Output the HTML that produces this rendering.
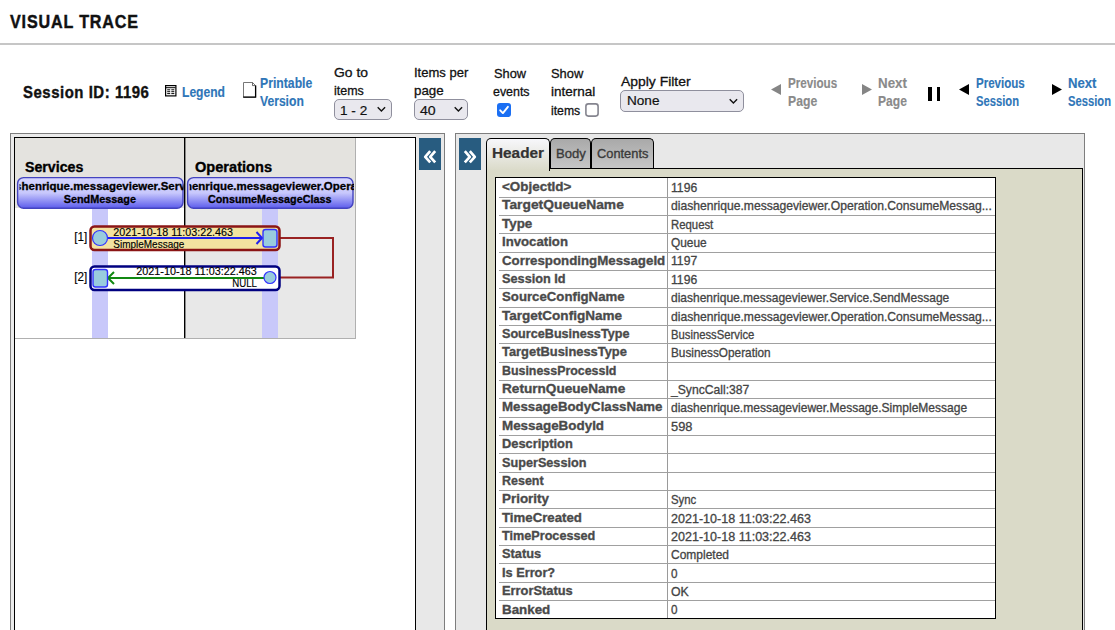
<!DOCTYPE html>
<html><head><meta charset="utf-8"><style>
*{margin:0;padding:0;box-sizing:border-box}
html,body{width:1115px;height:630px;overflow:hidden;background:#fff;font-family:"Liberation Sans",sans-serif;color:#000}
.a{position:absolute;white-space:nowrap}
</style></head><body>
<div class="a" style="left:10.00px;top:10.62px;font-size:19px;line-height:22.8px;font-weight:bold;color:#111;-webkit-text-stroke:0.45px #111;transform:scaleX(0.8472);transform-origin:0 0;letter-spacing:1.0px;">VISUAL TRACE</div>
<div class="a" style="left:0;top:43px;width:1115px;height:2px;background:#c6c6c6"></div>
<div class="a" style="left:23.00px;top:82.70px;font-size:16.8px;line-height:20.16px;font-weight:bold;color:#111;-webkit-text-stroke:0.4px #111;transform:scaleX(0.8899);transform-origin:0 0;letter-spacing:0.6px;">Session ID: 1196</div>
<svg class="a" style="left:165px;top:85px" width="12" height="12" viewBox="0 0 12 12">
<rect x="0.6" y="0.6" width="10.3" height="10.3" fill="#fff" stroke="#000" stroke-width="1.2"/>
<rect x="1" y="2.2" width="9.5" height="1" fill="#000"/>
<rect x="2.2" y="4.3" width="3" height="1" fill="#000"/><rect x="6.3" y="4.3" width="3" height="1" fill="#000"/>
<rect x="2.2" y="6.2" width="3" height="1" fill="#000"/><rect x="6.3" y="6.2" width="3" height="1" fill="#000"/>
<rect x="2.2" y="8.1" width="3" height="1" fill="#000"/><rect x="6.3" y="8.1" width="3" height="1" fill="#000"/>
</svg>
<div class="a" style="left:181.90px;top:83.85px;font-size:14px;line-height:16.8px;font-weight:bold;color:#2f76b8;-webkit-text-stroke:0.15px #2f76b8;transform:scaleX(0.8640);transform-origin:0 0;">Legend</div>
<svg class="a" style="left:242px;top:81px" width="16" height="18" viewBox="0 0 16 18">
<path d="M1.5 16.2 V1.5 H10.5 L13.6 4.6 V16.2 Z" fill="#fff" stroke="#777" stroke-width="1"/>
<path d="M13.6 4.6 V16.2 H1.2" fill="none" stroke="#000" stroke-width="1.3"/>
<path d="M10.5 1.5 V4.6 H13.6" fill="none" stroke="#444" stroke-width="0.8"/>
</svg>
<div class="a" style="left:259.90px;top:74.95px;font-size:14px;line-height:16.8px;font-weight:bold;color:#2f76b8;-webkit-text-stroke:0.15px #2f76b8;transform:scaleX(0.8728);transform-origin:0 0;">Printable</div>
<div class="a" style="left:259.50px;top:92.85px;font-size:14px;line-height:16.8px;font-weight:bold;color:#2f76b8;-webkit-text-stroke:0.15px #2f76b8;transform:scaleX(0.8660);transform-origin:0 0;">Version</div>
<div class="a" style="left:334.00px;top:65.01px;font-size:13.2px;line-height:15.84px;color:#111;-webkit-text-stroke:0.3px #111;transform:scaleX(1.0535);transform-origin:0 0;">Go to</div>
<div class="a" style="left:333.90px;top:82.91px;font-size:13.2px;line-height:15.84px;color:#111;-webkit-text-stroke:0.3px #111;transform:scaleX(0.9446);transform-origin:0 0;">items</div>
<div class="a" style="left:414.30px;top:65.01px;font-size:13.2px;line-height:15.84px;color:#111;-webkit-text-stroke:0.3px #111;transform:scaleX(0.9871);transform-origin:0 0;">Items per</div>
<div class="a" style="left:414.30px;top:82.61px;font-size:13.2px;line-height:15.84px;color:#111;-webkit-text-stroke:0.3px #111;transform:scaleX(1.0112);transform-origin:0 0;">page</div>
<div class="a" style="left:493.60px;top:66.01px;font-size:13.2px;line-height:15.84px;color:#111;-webkit-text-stroke:0.3px #111;transform:scaleX(0.9708);transform-origin:0 0;">Show</div>
<div class="a" style="left:493.40px;top:83.61px;font-size:13.2px;line-height:15.84px;color:#111;-webkit-text-stroke:0.3px #111;transform:scaleX(0.9407);transform-origin:0 0;">events</div>
<div class="a" style="left:551.00px;top:66.01px;font-size:13.2px;line-height:15.84px;color:#111;-webkit-text-stroke:0.3px #111;transform:scaleX(0.9768);transform-origin:0 0;">Show</div>
<div class="a" style="left:550.80px;top:83.61px;font-size:13.2px;line-height:15.84px;color:#111;-webkit-text-stroke:0.3px #111;transform:scaleX(1.0232);transform-origin:0 0;">internal</div>
<div class="a" style="left:550.80px;top:102.91px;font-size:13.2px;line-height:15.84px;color:#111;-webkit-text-stroke:0.3px #111;transform:scaleX(0.9256);transform-origin:0 0;">items</div>
<div class="a" style="left:620.80px;top:73.81px;font-size:13.2px;line-height:15.84px;color:#111;-webkit-text-stroke:0.3px #111;transform:scaleX(1.0555);transform-origin:0 0;">Apply Filter</div>
<div class="a" style="left:334px;top:99px;width:58px;height:21px;border:1px solid #8f8f9d;border-radius:5px;background:#e9e8ee"></div><div class="a" style="left:339.50px;top:102.52px;font-size:13.4px;line-height:16.08px;color:#111;-webkit-text-stroke:0.2px #111;transform:scaleX(1.0149);transform-origin:0 0;">1 - 2</div><svg class="a" style="left:376.5px;top:106.30px" width="9" height="7" viewBox="0 0 9 7"><path d="M0.7 1.3 L4.4 5 L8.1 1.3" fill="none" stroke="#111" stroke-width="1.4"/></svg>
<div class="a" style="left:414px;top:99px;width:54px;height:21px;border:1px solid #8f8f9d;border-radius:5px;background:#e9e8ee"></div><div class="a" style="left:420.00px;top:102.52px;font-size:13.4px;line-height:16.08px;color:#111;-webkit-text-stroke:0.2px #111;transform:scaleX(1.0532);transform-origin:0 0;">40</div><svg class="a" style="left:453.8px;top:106.30px" width="9" height="7" viewBox="0 0 9 7"><path d="M0.7 1.3 L4.4 5 L8.1 1.3" fill="none" stroke="#111" stroke-width="1.4"/></svg>
<div class="a" style="left:620px;top:90px;width:124px;height:21.5px;border:1px solid #8f8f9d;border-radius:5px;background:#e9e8ee"></div><div class="a" style="left:627.00px;top:93.32px;font-size:13.4px;line-height:16.08px;color:#111;-webkit-text-stroke:0.2px #111;transform:scaleX(1.0148);transform-origin:0 0;">None</div><svg class="a" style="left:728.6px;top:97.55px" width="9" height="7" viewBox="0 0 9 7"><path d="M0.7 1.3 L4.4 5 L8.1 1.3" fill="none" stroke="#111" stroke-width="1.4"/></svg>
<svg class="a" style="left:497px;top:103px" width="14" height="14" viewBox="0 0 14 14">
<rect x="0" y="0" width="14" height="14" rx="3" fill="#1b6ff3"/>
<path d="M3.2 7.3 L5.9 10.1 L10.9 3.8" fill="none" stroke="#fff" stroke-width="1.9" stroke-linecap="round" stroke-linejoin="round"/>
</svg>
<svg class="a" style="left:585px;top:103px" width="14" height="14" viewBox="0 0 14 14">
<rect x="0.9" y="0.9" width="12.2" height="12.2" rx="2.5" fill="#fff" stroke="#85858f" stroke-width="1.6"/>
</svg>
<svg class="a" style="left:770px;top:83px" width="12" height="13" viewBox="0 0 12 13"><path d="M1 6.5 L11 1 V12 Z" fill="#858585"/></svg>
<div class="a" style="left:787.80px;top:75.15px;font-size:14px;line-height:16.8px;font-weight:bold;color:#8a8a8a;-webkit-text-stroke:0.15px #8a8a8a;transform:scaleX(0.8318);transform-origin:0 0;">Previous</div>
<div class="a" style="left:787.80px;top:93.25px;font-size:14px;line-height:16.8px;font-weight:bold;color:#8a8a8a;-webkit-text-stroke:0.15px #8a8a8a;transform:scaleX(0.8727);transform-origin:0 0;">Page</div>
<svg class="a" style="left:861px;top:83px" width="12" height="13" viewBox="0 0 12 13"><path d="M11 6.5 L1 1 V12 Z" fill="#858585"/></svg>
<div class="a" style="left:877.80px;top:75.15px;font-size:14px;line-height:16.8px;font-weight:bold;color:#8a8a8a;-webkit-text-stroke:0.15px #8a8a8a;transform:scaleX(0.9524);transform-origin:0 0;">Next</div>
<div class="a" style="left:877.80px;top:93.25px;font-size:14px;line-height:16.8px;font-weight:bold;color:#8a8a8a;-webkit-text-stroke:0.15px #8a8a8a;transform:scaleX(0.8637);transform-origin:0 0;">Page</div>
<div class="a" style="left:928px;top:87px;width:3.5px;height:14px;background:#000"></div>
<div class="a" style="left:936.5px;top:87px;width:3.5px;height:14px;background:#000"></div>
<svg class="a" style="left:958px;top:83px" width="12" height="13" viewBox="0 0 12 13"><path d="M1 6.5 L11 1 V12 Z" fill="#000"/></svg>
<div class="a" style="left:976.00px;top:75.15px;font-size:14px;line-height:16.8px;font-weight:bold;color:#2f76b8;-webkit-text-stroke:0.15px #2f76b8;transform:scaleX(0.8250);transform-origin:0 0;">Previous</div>
<div class="a" style="left:976.00px;top:93.05px;font-size:14px;line-height:16.8px;font-weight:bold;color:#2f76b8;-webkit-text-stroke:0.15px #2f76b8;transform:scaleX(0.8009);transform-origin:0 0;">Session</div>
<svg class="a" style="left:1051px;top:83px" width="12" height="13" viewBox="0 0 12 13"><path d="M11 6.5 L1 1 V12 Z" fill="#000"/></svg>
<div class="a" style="left:1067.50px;top:75.15px;font-size:14px;line-height:16.8px;font-weight:bold;color:#2f76b8;-webkit-text-stroke:0.15px #2f76b8;transform:scaleX(0.9392);transform-origin:0 0;">Next</div>
<div class="a" style="left:1067.50px;top:93.05px;font-size:14px;line-height:16.8px;font-weight:bold;color:#2f76b8;-webkit-text-stroke:0.15px #2f76b8;transform:scaleX(0.8009);transform-origin:0 0;">Session</div>
<div class="a" style="left:10px;top:133px;width:435px;height:500px;border:1px solid #7e7e7e;background:#e8e8e8"></div>
<div class="a" style="left:11px;top:134px;width:3px;height:500px;background:#ebebeb"></div>
<div class="a" style="left:11px;top:134px;width:404px;height:3px;background:#ebebeb"></div>
<div class="a" style="left:14px;top:137px;width:402px;height:500px;border:1px solid #000;background:#fff"></div>
<svg class="a" style="left:15px;top:138px" width="400" height="492" viewBox="15 138 400 492">
<defs>
<linearGradient id="bg" x1="0" y1="0" x2="0" y2="1">
<stop offset="0" stop-color="#d6d6ff"/><stop offset="0.5" stop-color="#c8c8fc"/><stop offset="1" stop-color="#5c5cec"/>
</linearGradient>
<clipPath id="c1"><rect x="19.5" y="177" width="164" height="31"/></clipPath>
<clipPath id="c2"><rect x="189.5" y="177" width="164.5" height="31"/></clipPath>
</defs>
<rect x="15" y="138" width="170" height="70" fill="#e4e3df"/>
<rect x="185" y="138" width="170" height="200" fill="#e8e8e8"/>
<rect x="185" y="138" width="170" height="70" fill="#e4e3df"/>
<line x1="355.5" y1="138" x2="355.5" y2="338" stroke="#b0b0b0" stroke-width="1"/>
<line x1="15" y1="338.5" x2="356" y2="338.5" stroke="#b0b0b0" stroke-width="1"/>
<line x1="184.7" y1="138" x2="184.7" y2="338" stroke="#000" stroke-width="1.4"/>
<rect x="92" y="208" width="16" height="130" fill="#c8c8fa"/>
<rect x="262" y="208" width="16" height="130" fill="#c8c8fa"/>
<g font-family="Liberation Sans" font-weight="bold" stroke="#000" stroke-width="0.35">
<text x="25" y="172" font-size="14.5" textLength="58.3" lengthAdjust="spacingAndGlyphs">Services</text>
<text x="195" y="172" font-size="14.5" textLength="77" lengthAdjust="spacingAndGlyphs">Operations</text>
</g>
<rect x="17.6" y="177.6" width="165.4" height="30.6" rx="6" fill="url(#bg)" stroke="#4444c0" stroke-width="1.4"/>
<rect x="187.6" y="177.6" width="165.4" height="30.6" rx="6" fill="url(#bg)" stroke="#4444c0" stroke-width="1.4"/>
<g font-family="Liberation Sans" font-weight="bold" font-size="11" stroke="#000" stroke-width="0.3">
<g clip-path="url(#c1)"><text x="-1.5" y="189.8" textLength="203" lengthAdjust="spacingAndGlyphs">diashenrique.messageviewer.Service</text></g>
<text x="63.7" y="202.8" textLength="72.3" lengthAdjust="spacingAndGlyphs">SendMessage</text>
<g clip-path="url(#c2)"><text x="162" y="189.8" textLength="216" lengthAdjust="spacingAndGlyphs">diashenrique.messageviewer.Operation</text></g>
<text x="208" y="202.8" textLength="123.4" lengthAdjust="spacingAndGlyphs">ConsumeMessageClass</text>
</g>
<polyline points="280,238 333,238 333,277.5 280,277.5" fill="none" stroke="#992222" stroke-width="2"/>
<rect x="90.5" y="226.5" width="189" height="23.5" rx="4" fill="#f3e3a0" stroke="#8b1515" stroke-width="2.5"/>
<line x1="100" y1="238" x2="262" y2="238" stroke="#2222ee" stroke-width="2"/>
<polyline points="256.5,232 262,238 256.5,244" fill="none" stroke="#2222ee" stroke-width="2"/>
<circle cx="100" cy="238" r="7.5" fill="#99ccdd" stroke="#3333ff" stroke-width="1.2"/>
<rect x="263" y="229.5" width="14" height="17.5" rx="2.5" fill="#99ccdd" stroke="#3333ff" stroke-width="1.4"/>
<rect x="90.5" y="266.5" width="189" height="23.5" rx="4" fill="#fff" stroke="#000080" stroke-width="2.5"/>
<line x1="108" y1="278" x2="270" y2="278" stroke="#118811" stroke-width="2"/>
<polyline points="114,272 108,278 114,284" fill="none" stroke="#118811" stroke-width="2"/>
<rect x="93" y="269.5" width="14.5" height="17.5" rx="2.5" fill="#99ccdd" stroke="#3333ff" stroke-width="1.4"/>
<circle cx="270" cy="277.5" r="6" fill="#99ccdd" stroke="#3333ff" stroke-width="1.2"/>
<g font-family="Liberation Sans" font-size="11" fill="#000" stroke="#000" stroke-width="0.15">
<text x="74.3" y="241" font-size="12" textLength="13" lengthAdjust="spacingAndGlyphs">[1]</text>
<text x="113.3" y="235.8" textLength="119.7" lengthAdjust="spacingAndGlyphs">2021-10-18 11:03:22.463</text>
<text x="113.3" y="247.5" textLength="71" lengthAdjust="spacingAndGlyphs">SimpleMessage</text>
<text x="74.3" y="281" font-size="12" textLength="13" lengthAdjust="spacingAndGlyphs">[2]</text>
<text x="136.3" y="275.2" textLength="120.6" lengthAdjust="spacingAndGlyphs">2021-10-18 11:03:22.463</text>
<text x="232.2" y="287" textLength="24.7" lengthAdjust="spacingAndGlyphs">NULL</text>
</g>
</svg>

<div class="a" style="left:419px;top:138px;width:22px;height:32px;background:#285c80"></div>
<svg class="a" style="left:419px;top:138px" width="22" height="32" viewBox="0 0 22 32">
<path d="M11.2 13.2 L6.2 18.8 L11.2 24.4 M16.2 13.2 L11.2 18.8 L16.2 24.4" fill="none" stroke="#fff" stroke-width="2.7" stroke-linejoin="round"/></svg>
<div class="a" style="left:455px;top:133px;width:630px;height:500px;border:1px solid #7e7e7e;background:#e8e8e8"></div>
<div class="a" style="left:459px;top:138px;width:22px;height:32px;background:#285c80"></div>
<svg class="a" style="left:459px;top:138px" width="22" height="32" viewBox="0 0 22 32">
<path d="M5.8 13.2 L10.8 18.8 L5.8 24.4 M10.8 13.2 L15.8 18.8 L10.8 24.4" fill="none" stroke="#fff" stroke-width="2.7" stroke-linejoin="round"/></svg>
<div class="a" style="left:486px;top:168px;width:597px;height:470px;background:#dadac8;border-left:1.5px solid #000;border-top:1.5px solid #000;border-right:1.5px solid #000"></div>
<div class="a" style="left:486px;top:137.5px;width:63.5px;height:33px;border:1.5px solid #000;border-bottom:none;border-radius:5px 5px 0 0;background:linear-gradient(#f7f7fb 0%,#ededea 35%,#dadac8 100%)"></div>
<div class="a" style="left:550px;top:137.5px;width:41px;height:30.5px;border:1.5px solid #000;border-bottom:none;border-radius:5px 5px 0 0;background:linear-gradient(#a9a9a9,#c6c6c6)"></div>
<div class="a" style="left:591px;top:137.5px;width:63px;height:30.5px;border:1.5px solid #000;border-bottom:none;border-radius:5px 5px 0 0;background:linear-gradient(#a9a9a9,#c6c6c6)"></div>
<div class="a" style="left:491.90px;top:146.34px;font-size:13.8px;line-height:16.56px;font-weight:bold;color:#333;-webkit-text-stroke:0.2px #333;transform:scaleX(1.1115);transform-origin:0 0;">Header</div>
<div class="a" style="left:555.80px;top:145.92px;font-size:13.4px;line-height:16.08px;color:#3a3a3a;-webkit-text-stroke:0.35px #3a3a3a;transform:scaleX(0.9787);transform-origin:0 0;">Body</div>
<div class="a" style="left:596.90px;top:145.92px;font-size:13.4px;line-height:16.08px;color:#3a3a3a;-webkit-text-stroke:0.35px #3a3a3a;transform:scaleX(0.9584);transform-origin:0 0;">Contents</div>
<div class="a" style="left:495px;top:177px;width:501px;height:442px;background:#fff;border:1.5px solid #000"></div>
<div class="a" style="left:667px;top:178px;width:1px;height:440px;background:#9a9a9a"></div>
<div class="a" style="left:501.70px;top:179.02px;font-size:13.4px;line-height:16.08px;font-weight:bold;color:#4a4a4a;-webkit-text-stroke:0.35px #4a4a4a;transform:scaleX(1.0022);transform-origin:0 0;">&lt;ObjectId&gt;</div>
<div class="a" style="left:671.00px;top:180.95px;font-size:12.1px;line-height:14.52px;color:#444;-webkit-text-stroke:0.3px #444;transform:scaleX(1.0071);transform-origin:0 0;">1196</div>
<div class="a" style="left:499px;top:196.50px;width:496px;height:1px;background:#a0a0a0"></div>
<div class="a" style="left:501.70px;top:197.39px;font-size:13.4px;line-height:16.08px;font-weight:bold;color:#4a4a4a;-webkit-text-stroke:0.35px #4a4a4a;transform:scaleX(1.0317);transform-origin:0 0;">TargetQueueName</div>
<div class="a" style="left:671.00px;top:199.32px;font-size:12.1px;line-height:14.52px;color:#444;-webkit-text-stroke:0.3px #444;transform:scaleX(1.0026);transform-origin:0 0;">diashenrique.messageviewer.Operation.ConsumeMessag...</div>
<div class="a" style="left:499px;top:214.84px;width:496px;height:1px;background:#a0a0a0"></div>
<div class="a" style="left:501.70px;top:215.76px;font-size:13.4px;line-height:16.08px;font-weight:bold;color:#4a4a4a;-webkit-text-stroke:0.35px #4a4a4a;transform:scaleX(1.0005);transform-origin:0 0;">Type</div>
<div class="a" style="left:671.00px;top:217.69px;font-size:12.1px;line-height:14.52px;color:#444;-webkit-text-stroke:0.3px #444;transform:scaleX(0.9385);transform-origin:0 0;">Request</div>
<div class="a" style="left:499px;top:233.18px;width:496px;height:1px;background:#a0a0a0"></div>
<div class="a" style="left:501.70px;top:234.13px;font-size:13.4px;line-height:16.08px;font-weight:bold;color:#4a4a4a;-webkit-text-stroke:0.35px #4a4a4a;transform:scaleX(0.9851);transform-origin:0 0;">Invocation</div>
<div class="a" style="left:671.00px;top:236.06px;font-size:12.1px;line-height:14.52px;color:#444;-webkit-text-stroke:0.3px #444;transform:scaleX(0.9827);transform-origin:0 0;">Queue</div>
<div class="a" style="left:499px;top:251.52px;width:496px;height:1px;background:#a0a0a0"></div>
<div class="a" style="left:501.70px;top:252.50px;font-size:13.4px;line-height:16.08px;font-weight:bold;color:#4a4a4a;-webkit-text-stroke:0.35px #4a4a4a;transform:scaleX(0.9924);transform-origin:0 0;">CorrespondingMessageId</div>
<div class="a" style="left:671.00px;top:254.43px;font-size:12.1px;line-height:14.52px;color:#444;-webkit-text-stroke:0.3px #444;transform:scaleX(1.0071);transform-origin:0 0;">1197</div>
<div class="a" style="left:499px;top:269.86px;width:496px;height:1px;background:#a0a0a0"></div>
<div class="a" style="left:501.70px;top:270.87px;font-size:13.4px;line-height:16.08px;font-weight:bold;color:#4a4a4a;-webkit-text-stroke:0.35px #4a4a4a;transform:scaleX(0.9503);transform-origin:0 0;">Session Id</div>
<div class="a" style="left:671.00px;top:272.80px;font-size:12.1px;line-height:14.52px;color:#444;-webkit-text-stroke:0.3px #444;transform:scaleX(1.0071);transform-origin:0 0;">1196</div>
<div class="a" style="left:499px;top:288.20px;width:496px;height:1px;background:#a0a0a0"></div>
<div class="a" style="left:501.70px;top:289.24px;font-size:13.4px;line-height:16.08px;font-weight:bold;color:#4a4a4a;-webkit-text-stroke:0.35px #4a4a4a;transform:scaleX(0.9867);transform-origin:0 0;">SourceConfigName</div>
<div class="a" style="left:671.00px;top:291.17px;font-size:12.1px;line-height:14.52px;color:#444;-webkit-text-stroke:0.3px #444;transform:scaleX(0.9926);transform-origin:0 0;">diashenrique.messageviewer.Service.SendMessage</div>
<div class="a" style="left:499px;top:306.54px;width:496px;height:1px;background:#a0a0a0"></div>
<div class="a" style="left:501.70px;top:307.61px;font-size:13.4px;line-height:16.08px;font-weight:bold;color:#4a4a4a;-webkit-text-stroke:0.35px #4a4a4a;transform:scaleX(1.0102);transform-origin:0 0;">TargetConfigName</div>
<div class="a" style="left:671.00px;top:309.54px;font-size:12.1px;line-height:14.52px;color:#444;-webkit-text-stroke:0.3px #444;transform:scaleX(1.0026);transform-origin:0 0;">diashenrique.messageviewer.Operation.ConsumeMessag...</div>
<div class="a" style="left:499px;top:324.88px;width:496px;height:1px;background:#a0a0a0"></div>
<div class="a" style="left:501.70px;top:325.98px;font-size:13.4px;line-height:16.08px;font-weight:bold;color:#4a4a4a;-webkit-text-stroke:0.35px #4a4a4a;transform:scaleX(0.9423);transform-origin:0 0;">SourceBusinessType</div>
<div class="a" style="left:671.00px;top:327.91px;font-size:12.1px;line-height:14.52px;color:#444;-webkit-text-stroke:0.3px #444;transform:scaleX(0.9324);transform-origin:0 0;">BusinessService</div>
<div class="a" style="left:499px;top:343.22px;width:496px;height:1px;background:#a0a0a0"></div>
<div class="a" style="left:501.70px;top:344.35px;font-size:13.4px;line-height:16.08px;font-weight:bold;color:#4a4a4a;-webkit-text-stroke:0.35px #4a4a4a;transform:scaleX(0.9629);transform-origin:0 0;">TargetBusinessType</div>
<div class="a" style="left:671.00px;top:346.28px;font-size:12.1px;line-height:14.52px;color:#444;-webkit-text-stroke:0.3px #444;transform:scaleX(0.9751);transform-origin:0 0;">BusinessOperation</div>
<div class="a" style="left:499px;top:361.56px;width:496px;height:1px;background:#a0a0a0"></div>
<div class="a" style="left:501.70px;top:362.72px;font-size:13.4px;line-height:16.08px;font-weight:bold;color:#4a4a4a;-webkit-text-stroke:0.35px #4a4a4a;transform:scaleX(0.9260);transform-origin:0 0;">BusinessProcessId</div>
<div class="a" style="left:499px;top:379.90px;width:496px;height:1px;background:#a0a0a0"></div>
<div class="a" style="left:501.70px;top:381.09px;font-size:13.4px;line-height:16.08px;font-weight:bold;color:#4a4a4a;-webkit-text-stroke:0.35px #4a4a4a;transform:scaleX(1.0159);transform-origin:0 0;">ReturnQueueName</div>
<div class="a" style="left:670.61px;top:383.02px;font-size:12.1px;line-height:14.52px;color:#444;-webkit-text-stroke:0.3px #444;transform:scaleX(1.0048);transform-origin:0 0;">_SyncCall:387</div>
<div class="a" style="left:499px;top:398.24px;width:496px;height:1px;background:#a0a0a0"></div>
<div class="a" style="left:501.70px;top:399.46px;font-size:13.4px;line-height:16.08px;font-weight:bold;color:#4a4a4a;-webkit-text-stroke:0.35px #4a4a4a;transform:scaleX(0.9891);transform-origin:0 0;">MessageBodyClassName</div>
<div class="a" style="left:671.00px;top:401.39px;font-size:12.1px;line-height:14.52px;color:#444;-webkit-text-stroke:0.3px #444;transform:scaleX(0.9944);transform-origin:0 0;">diashenrique.messageviewer.Message.SimpleMessage</div>
<div class="a" style="left:499px;top:416.58px;width:496px;height:1px;background:#a0a0a0"></div>
<div class="a" style="left:501.70px;top:417.83px;font-size:13.4px;line-height:16.08px;font-weight:bold;color:#4a4a4a;-webkit-text-stroke:0.35px #4a4a4a;transform:scaleX(1.0009);transform-origin:0 0;">MessageBodyId</div>
<div class="a" style="left:671.00px;top:419.76px;font-size:12.1px;line-height:14.52px;color:#444;-webkit-text-stroke:0.3px #444;transform:scaleX(1.0606);transform-origin:0 0;">598</div>
<div class="a" style="left:499px;top:434.92px;width:496px;height:1px;background:#a0a0a0"></div>
<div class="a" style="left:501.70px;top:436.20px;font-size:13.4px;line-height:16.08px;font-weight:bold;color:#4a4a4a;-webkit-text-stroke:0.35px #4a4a4a;transform:scaleX(0.9607);transform-origin:0 0;">Description</div>
<div class="a" style="left:499px;top:453.26px;width:496px;height:1px;background:#a0a0a0"></div>
<div class="a" style="left:501.70px;top:454.57px;font-size:13.4px;line-height:16.08px;font-weight:bold;color:#4a4a4a;-webkit-text-stroke:0.35px #4a4a4a;transform:scaleX(0.9454);transform-origin:0 0;">SuperSession</div>
<div class="a" style="left:499px;top:471.60px;width:496px;height:1px;background:#a0a0a0"></div>
<div class="a" style="left:501.70px;top:472.94px;font-size:13.4px;line-height:16.08px;font-weight:bold;color:#4a4a4a;-webkit-text-stroke:0.35px #4a4a4a;transform:scaleX(0.9331);transform-origin:0 0;">Resent</div>
<div class="a" style="left:499px;top:489.94px;width:496px;height:1px;background:#a0a0a0"></div>
<div class="a" style="left:501.70px;top:491.31px;font-size:13.4px;line-height:16.08px;font-weight:bold;color:#4a4a4a;-webkit-text-stroke:0.35px #4a4a4a;transform:scaleX(1.0021);transform-origin:0 0;">Priority</div>
<div class="a" style="left:671.00px;top:493.24px;font-size:12.1px;line-height:14.52px;color:#444;-webkit-text-stroke:0.3px #444;transform:scaleX(0.9408);transform-origin:0 0;">Sync</div>
<div class="a" style="left:499px;top:508.28px;width:496px;height:1px;background:#a0a0a0"></div>
<div class="a" style="left:501.70px;top:509.68px;font-size:13.4px;line-height:16.08px;font-weight:bold;color:#4a4a4a;-webkit-text-stroke:0.35px #4a4a4a;transform:scaleX(0.9884);transform-origin:0 0;">TimeCreated</div>
<div class="a" style="left:671.00px;top:511.61px;font-size:12.1px;line-height:14.52px;color:#444;-webkit-text-stroke:0.3px #444;transform:scaleX(1.0370);transform-origin:0 0;">2021-10-18 11:03:22.463</div>
<div class="a" style="left:499px;top:526.62px;width:496px;height:1px;background:#a0a0a0"></div>
<div class="a" style="left:501.70px;top:528.05px;font-size:13.4px;line-height:16.08px;font-weight:bold;color:#4a4a4a;-webkit-text-stroke:0.35px #4a4a4a;transform:scaleX(0.9441);transform-origin:0 0;">TimeProcessed</div>
<div class="a" style="left:671.00px;top:529.98px;font-size:12.1px;line-height:14.52px;color:#444;-webkit-text-stroke:0.3px #444;transform:scaleX(1.0370);transform-origin:0 0;">2021-10-18 11:03:22.463</div>
<div class="a" style="left:499px;top:544.96px;width:496px;height:1px;background:#a0a0a0"></div>
<div class="a" style="left:501.70px;top:546.42px;font-size:13.4px;line-height:16.08px;font-weight:bold;color:#4a4a4a;-webkit-text-stroke:0.35px #4a4a4a;transform:scaleX(0.9551);transform-origin:0 0;">Status</div>
<div class="a" style="left:671.00px;top:548.35px;font-size:12.1px;line-height:14.52px;color:#444;-webkit-text-stroke:0.3px #444;transform:scaleX(0.9914);transform-origin:0 0;">Completed</div>
<div class="a" style="left:499px;top:563.30px;width:496px;height:1px;background:#a0a0a0"></div>
<div class="a" style="left:501.70px;top:564.79px;font-size:13.4px;line-height:16.08px;font-weight:bold;color:#4a4a4a;-webkit-text-stroke:0.35px #4a4a4a;transform:scaleX(0.9526);transform-origin:0 0;">Is Error?</div>
<div class="a" style="left:671.00px;top:566.72px;font-size:12.1px;line-height:14.52px;color:#444;-webkit-text-stroke:0.3px #444;transform:scaleX(0.9679);transform-origin:0 0;">0</div>
<div class="a" style="left:499px;top:581.64px;width:496px;height:1px;background:#a0a0a0"></div>
<div class="a" style="left:501.70px;top:583.16px;font-size:13.4px;line-height:16.08px;font-weight:bold;color:#4a4a4a;-webkit-text-stroke:0.35px #4a4a4a;transform:scaleX(0.9602);transform-origin:0 0;">ErrorStatus</div>
<div class="a" style="left:671.00px;top:585.09px;font-size:12.1px;line-height:14.52px;color:#444;-webkit-text-stroke:0.3px #444;transform:scaleX(1.0180);transform-origin:0 0;">OK</div>
<div class="a" style="left:499px;top:599.98px;width:496px;height:1px;background:#a0a0a0"></div>
<div class="a" style="left:501.70px;top:601.53px;font-size:13.4px;line-height:16.08px;font-weight:bold;color:#4a4a4a;-webkit-text-stroke:0.35px #4a4a4a;transform:scaleX(0.9978);transform-origin:0 0;">Banked</div>
<div class="a" style="left:671.00px;top:603.46px;font-size:12.1px;line-height:14.52px;color:#444;-webkit-text-stroke:0.3px #444;transform:scaleX(0.9679);transform-origin:0 0;">0</div>
</body></html>
